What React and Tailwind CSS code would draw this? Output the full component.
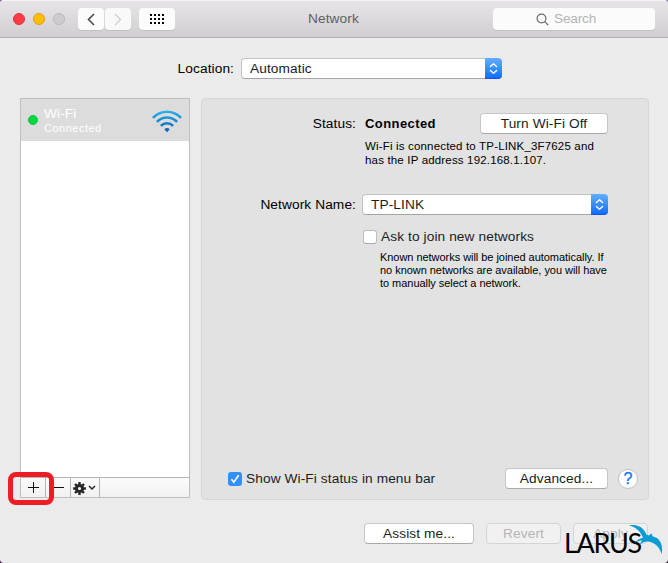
import React from "react";

function Button({ children, className = "", disabled = false }) {
  const tone = disabled
    ? "border-[#d4d4d4] bg-[#f1f1f1] text-[#b5b5b5]"
    : "border-[#c6c6c6] border-b-[#a9a9a9] bg-white text-[#1c1c1c]";
  return (
    <button
      className={`flex h-[21px] shrink-0 items-center justify-center rounded-[4px] border ${tone} ${className}`}
    >
      {children}
    </button>
  );
}

function Select({ value, className = "" }) {
  return (
    <div className={`flex h-[21px] shrink-0 ${className}`}>
      <div className="flex flex-1 items-center rounded-l-[4px] border border-r-0 border-[#c2c2c2] border-b-[#a5a5a5] bg-white pl-2 text-[#1c1c1c]">
        {value}
      </div>
      <div className="flex w-[17px] items-center justify-center rounded-r-[4px] border-b border-[#1a50f0] bg-gradient-to-b from-[#62aefb] to-[#0b6cff]">
        <svg width="9" height="13" viewBox="0 0 9 13" fill="none" stroke="#fff" strokeWidth="1.4" strokeLinecap="round" strokeLinejoin="round">
          <path d="M1.4 4.5 4.5 1.7l3.1 2.8M1.4 8.5l3.1 2.8 3.1-2.8" />
        </svg>
      </div>
    </div>
  );
}

function TitleBar() {
  return (
    <header className="flex h-[38px] shrink-0 items-center border-t border-b border-t-[#f4f2f4] border-b-[#b1afb1] bg-gradient-to-b from-[#e8e5e8] to-[#d1ced1] pl-[13px] pr-[13px]">
      <div className="flex w-[295px] items-center">
        <span className="size-3 rounded-full border border-[#e0303a] bg-[#ff3b47]" />
        <span className="ml-2 size-3 rounded-full border border-[#e09c10] bg-[#ffbd05]" />
        <span className="ml-2 size-3 rounded-full border border-[#b9b7b9] bg-[#cecccf]" />
        <span className="ml-[13px] flex h-[22px] w-[26px] items-center justify-center rounded-[4px] bg-[#fcfcfc] shadow-[0_1px_0_#c3c0c3]">
          <svg width="8" height="13" viewBox="0 0 8 13" fill="none" stroke="#4a4a4a" strokeWidth="1.6">
            <path d="M7 1 1.5 6.5 7 12" />
          </svg>
        </span>
        <span className="ml-px flex h-[22px] w-[26px] items-center justify-center rounded-[4px] bg-[#f9f9f9] shadow-[0_1px_0_#c3c0c3]">
          <svg width="8" height="13" viewBox="0 0 8 13" fill="none" stroke="#cfcfcf" strokeWidth="1.4">
            <path d="m1 1 5.5 5.5L1 12" />
          </svg>
        </span>
        <span className="ml-2 flex h-[22px] w-9 items-center justify-center rounded-[4px] bg-[#fcfcfc] shadow-[0_1px_0_#c3c0c3]">
          <span className="grid grid-cols-4 gap-x-[2px] gap-y-[2px]">
            {Array.from({ length: 12 }, (_, i) => (
              <i key={i} className="size-[2px] bg-black" />
            ))}
          </span>
        </span>
      </div>
      <h1 className="flex-1 text-[#606060]">Network</h1>
      <div className="flex h-[22px] w-[162px] items-center rounded-[4px] bg-[#fbfbfb] pl-[43px] text-[#b4b4b4] shadow-[0_1px_0_#c3c0c3]">
        <svg width="13" height="13" viewBox="0 0 13 13" fill="none" stroke="#6a6a6a" strokeWidth="1.2">
          <circle cx="5.5" cy="5.5" r="4.4" />
          <path d="m8.7 8.7 3.5 3.5" />
        </svg>
        <span className="ml-[5px] tracking-[-0.2px]">Search</span>
      </div>
    </header>
  );
}

function WifiIcon() {
  return (
    <svg className="mt-[2px]" width="30" height="23" viewBox="0 0 30 23" fill="none" stroke="url(#wifi)" strokeWidth="2.5">
      <defs>
        <linearGradient id="wifi" gradientUnits="userSpaceOnUse" x1="0" y1="0" x2="0" y2="22">
          <stop offset="0" stopColor="#2db5ee" />
          <stop offset="0.6" stopColor="#0c80d0" />
          <stop offset="1" stopColor="#0c5fc0" />
        </linearGradient>
      </defs>
      <path d="M.9 7.8C8.7-.4 21.3-.4 29.1 7.8" />
      <path d="M4.9 11.8c5.6-5.8 14.6-5.8 20.2 0" />
      <path d="M8.9 15.8c3.4-3.5 8.8-3.5 12.2 0" />
      <path d="M15 22.2 12.3 19.3c1.4-1.6 4-1.6 5.4 0Z" fill="url(#wifi)" stroke="none" />
    </svg>
  );
}

function Sidebar() {
  return (
    <aside className="relative flex h-[400px] w-[170px] flex-col border border-[#bfbfbf] bg-white">
      <div className="flex h-[42px] shrink-0 items-center bg-[#dcdcdc] pl-[7px] text-white">
        <span className="size-[10px] rounded-full border border-[#0cc53c] bg-[#00d942]" />
        <div className="ml-[6px] w-[108px]">
          <div className="h-[15px] leading-[15px]">Wi-Fi</div>
          <div className="h-[14px] text-[11px] leading-[14px] tracking-[0.5px]">Connected</div>
        </div>
        <WifiIcon />
      </div>
      <div className="flex-1" />
      <div className="flex h-[20px] border-t border-[#b5b5b5] bg-gradient-to-b from-[#fbfbfb] to-[#f1f1f1]">
        <div className="flex w-[25px] items-center justify-center border-r border-[#b5b5b5]">
          <svg width="11" height="11" viewBox="0 0 11 11" stroke="#111" strokeWidth="1">
            <path d="M0 5.5h11M5.5 0v11" />
          </svg>
        </div>
        <div className="flex w-[25px] items-center justify-center border-r border-[#b5b5b5]">
          <svg width="11" height="11" viewBox="0 0 11 11" stroke="#111" strokeWidth="1">
            <path d="M0 5.5h11" />
          </svg>
        </div>
        <div className="flex w-[29px] items-center border-r border-[#b5b5b5] pl-[2px]">
          <svg className="mt-px" width="13" height="13" viewBox="-6.5 -6.5 13 13" fill="none" stroke="#262626">
            <circle r="3.1" strokeWidth="3" />
            <path strokeWidth="2.4" d="M0-6.4V-4M0 4v2.4M-6.4 0H-4M4 0h2.4M-4.5-4.5l1.7 1.7M2.8 2.8l1.7 1.7M-4.5 4.5l1.7-1.7M2.8-2.8l1.7-1.7" />
          </svg>
          <svg className="ml-[2px]" width="8" height="6" viewBox="0 0 8 6" fill="none" stroke="#262626" strokeWidth="1.5">
            <path d="m1 1 3 3 3-3" />
          </svg>
        </div>
      </div>
      <div className="absolute left-[-13px] top-[373px] h-[33px] w-[46px] rounded-[8px] border-[5px] border-[#ee1c24]" />
    </aside>
  );
}

function Panel() {
  return (
    <main className="flex h-[402px] w-[448px] flex-col rounded-[4px] border border-[#d6d6d6] bg-[#e2e2e2] text-black">
      <div className="mt-[14px] flex h-[21px] items-center">
        <span className="w-[154px] text-right">Status:</span>
        <span className="ml-[9px] flex-1 text-[13px] font-bold tracking-[0.42px]">Connected</span>
        <Button className="mr-[40px] w-[128px]">Turn Wi-Fi Off</Button>
      </div>
      <p className="ml-[163px] mt-[5px] whitespace-nowrap text-[11.5px] leading-[14px] tracking-[0.17px]">
        Wi-Fi is connected to TP-LINK_3F7625 and
        <br />
        has the IP address 192.168.1.107.
      </p>
      <div className="mt-[27px] flex h-[21px] items-center">
        <span className="w-[154px] text-right">Network Name:</span>
        <Select value="TP-LINK" className="ml-[6px] w-[246px]" />
      </div>
      <div className="ml-[161px] mt-[15px] flex h-[14px] items-center text-[#1c1c1c]">
        <span className="size-[14px] rounded-[3px] border border-[#bdbdbd] border-b-[#a9a9a9] bg-white" />
        <span className="ml-[4px]">Ask to join new networks</span>
      </div>
      <p className="ml-[178px] mt-[7px] whitespace-nowrap text-[11px] leading-[13px] tracking-[-0.04px]">
        Known networks will be joined automatically. If
        <br />
        no known networks are available, you will have
        <br />
        to manually select a network.
      </p>
      <div className="mb-[10px] mt-auto flex h-[21px] items-center text-[#1c1c1c]">
        <span className="ml-[26px] flex size-[14px] items-center justify-center rounded-[3px] bg-[#3390fb]">
          <svg width="10" height="10" viewBox="0 0 10 10" fill="none" stroke="#fff" strokeWidth="1.6">
            <path d="m1.5 5.3 2.3 2.9L8.7 1.2" />
          </svg>
        </span>
        <span className="ml-[4px] flex-1">Show Wi-Fi status in menu bar</span>
        <Button className="w-[103px]">Advanced...</Button>
        <span className="ml-[10px] mr-[10px] flex size-5 items-center justify-center rounded-full border border-[#c3c3c3] bg-white text-[16px] tracking-normal text-[#0c78ff] [-webkit-text-stroke:0.3px_#0c78ff]">
          ?
        </span>
      </div>
    </main>
  );
}

function Logo() {
  return (
    <div className="absolute left-[564px] top-[522px] h-[34px] w-[100px]">
      <span className="absolute left-0 top-[4px] font-['Lato'] text-[27px] leading-[34px] tracking-[-1.3px] text-black">LARUS</span>
      <svg className="absolute left-[64px] top-[2px]" width="35" height="31" viewBox="0 0 35 31" fill="#0d9bd3">
        <path d="M1 1.3C8 .3 15 2 18.6 10.8L21 11.6 23.4 9.3 24.6 12.2 29 14C33 17 35 22 33.8 30.3C32 24 28 19.6 21.5 17.8 18 17 15.5 18 11.5 20.5L14 16.6C11.5 16.5 9.5 17.4 6.5 19 9 16 11.5 14.4 15 13.4 12.5 8 9 3.6 1 1.3Z" />
      </svg>
    </div>
  );
}

export default function App() {
  return (
    <div className="h-[563px] w-[668px] overflow-hidden bg-gradient-to-b from-[#6f70b8] to-[#3b2440]">
      <div className="relative flex h-full flex-col overflow-hidden rounded-[4px] bg-[#ebebeb] font-['Liberation_Sans',Arial,sans-serif] text-[13.7px] leading-4 tracking-[0.1px]">
        <TitleBar />
        <div className="mt-5 flex h-[21px] shrink-0 items-center">
          <span className="w-[234px] text-right text-black">Location:</span>
          <Select value="Automatic" className="ml-[7px] w-[261px]" />
        </div>
        <div className="mt-[19px] flex shrink-0 gap-[11px] pl-5">
          <Sidebar />
          <Panel />
        </div>
        <footer className="mt-[23px] flex shrink-0 pl-[364px]">
          <Button className="w-[110px]">Assist me...</Button>
          <Button disabled className="ml-3 w-[75px]">Revert</Button>
          <Button disabled className="ml-3 w-[75px]">Apply</Button>
        </footer>
        <Logo />
      </div>
    </div>
  );
}
